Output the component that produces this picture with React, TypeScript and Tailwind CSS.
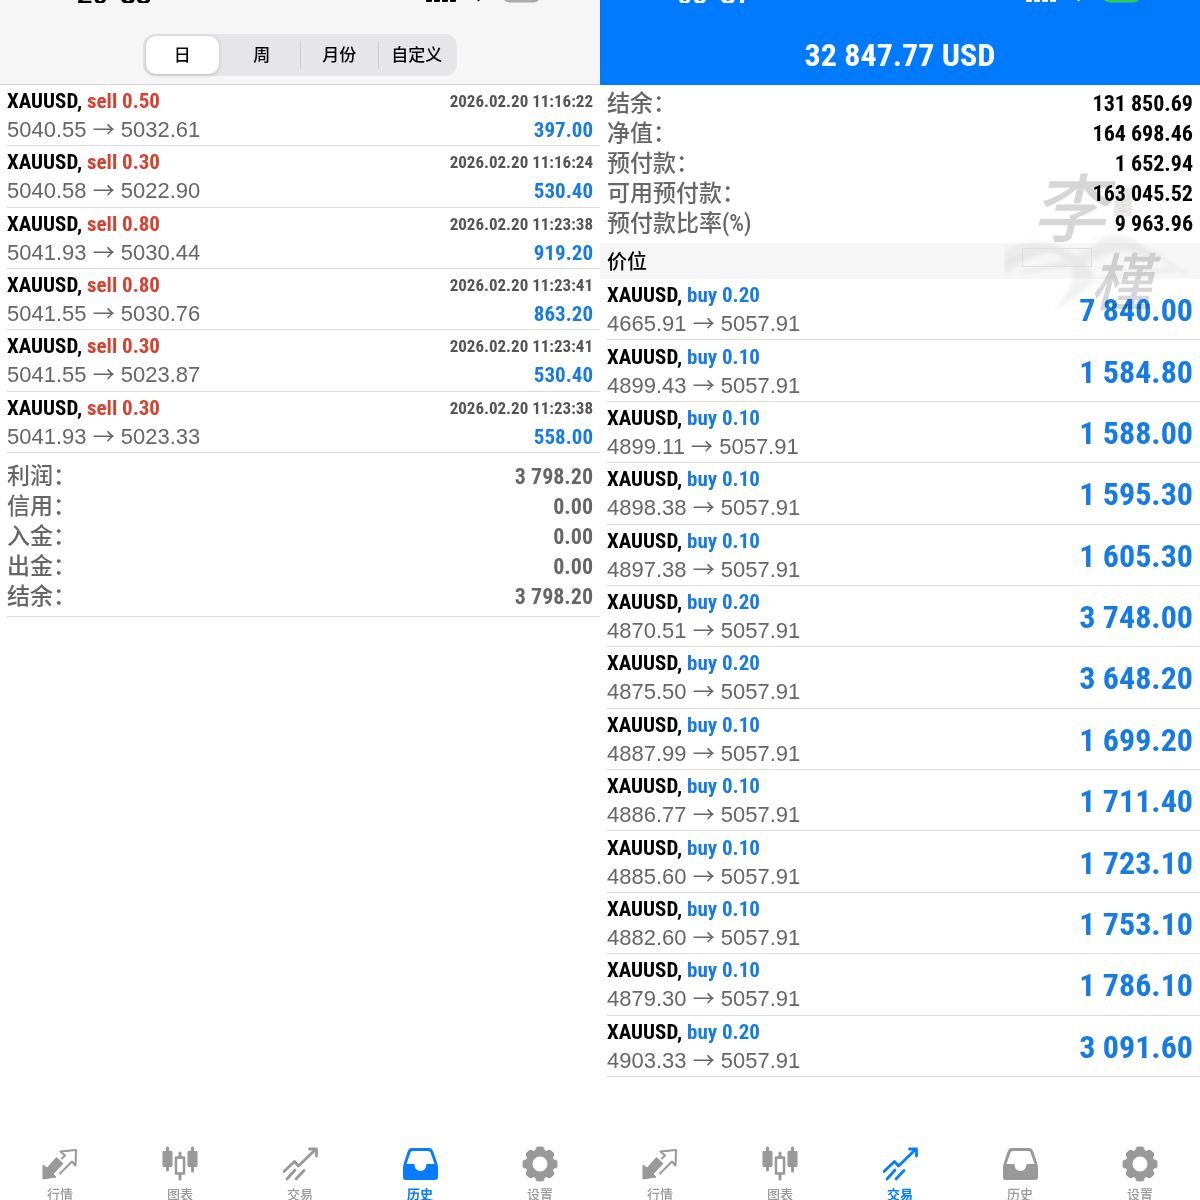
import { useState } from "react";
import type { ReactNode } from "react";

const CONDENSED = "font-['Liberation_Sans_Narrow','Roboto_Condensed','Liberation_Sans','Noto_Sans_CJK_SC',sans-serif] font-bold";
const REGULAR = "font-['Liberation_Sans','Noto_Sans_CJK_SC',sans-serif]";

type Deal = { side: string; lot: string; open: string; close: string; profit: string; time?: string };

const deals: Deal[] = [
  { side: "sell", lot: "0.50", open: "5040.55", close: "5032.61", profit: "397.00", time: "2026.02.20 11:16:22" },
  { side: "sell", lot: "0.30", open: "5040.58", close: "5022.90", profit: "530.40", time: "2026.02.20 11:16:24" },
  { side: "sell", lot: "0.80", open: "5041.93", close: "5030.44", profit: "919.20", time: "2026.02.20 11:23:38" },
  { side: "sell", lot: "0.80", open: "5041.55", close: "5030.76", profit: "863.20", time: "2026.02.20 11:23:41" },
  { side: "sell", lot: "0.30", open: "5041.55", close: "5023.87", profit: "530.40", time: "2026.02.20 11:23:41" },
  { side: "sell", lot: "0.30", open: "5041.93", close: "5023.33", profit: "558.00", time: "2026.02.20 11:23:38" },
];

const positions: Deal[] = [
  ["0.20", "4665.91", "7 840.00"],
  ["0.10", "4899.43", "1 584.80"],
  ["0.10", "4899.11", "1 588.00"],
  ["0.10", "4898.38", "1 595.30"],
  ["0.10", "4897.38", "1 605.30"],
  ["0.20", "4870.51", "3 748.00"],
  ["0.20", "4875.50", "3 648.20"],
  ["0.10", "4887.99", "1 699.20"],
  ["0.10", "4886.77", "1 711.40"],
  ["0.10", "4885.60", "1 723.10"],
  ["0.10", "4882.60", "1 753.10"],
  ["0.10", "4879.30", "1 786.10"],
  ["0.20", "4903.33", "3 091.60"],
].map(([lot, open, profit]) => ({ side: "buy", lot, open, close: "5057.91", profit }));

const totals = [
  ["利润：", "3 798.20"],
  ["信用：", "0.00"],
  ["入金：", "0.00"],
  ["出金：", "0.00"],
  ["结余：", "3 798.20"],
];

const account = [
  ["结余：", "131 850.69"],
  ["净值：", "164 698.46"],
  ["预付款：", "1 652.94"],
  ["可用预付款：", "163 045.52"],
  ["预付款比率(%)", "9 963.96"],
];

function StatusBar({ hours, minutes, battery }: { hours: string; minutes: string; battery: string }) {
  return (
    <div className="flex h-[3px] items-end justify-between overflow-hidden pl-[77px] pr-[59px]">
      <div className={`${REGULAR} flex gap-3 text-[28px] font-bold leading-[16px]`}>
        <span>{hours}</span>
        <span>{minutes}</span>
      </div>
      <svg className="h-[3px] w-[116px]" viewBox="0 0 116 3" aria-hidden="true">
        <path d="M1 0h6v1a1 1 0 0 1-1 1H2a1 1 0 0 1-1-1zM9 0h6v1a1 1 0 0 1-1 1h-4a1 1 0 0 1-1-1zM17 0h6v1a1 1 0 0 1-1 1h-4a1 1 0 0 1-1-1zM25 0h6v1a1 1 0 0 1-1 1h-4a1 1 0 0 1-1-1zM52 0h3l-1.5 1.5z" fill="currentColor" />
        <path d="M79 0h35c-2 2-4 2.500-7 2.500H87c-4 0-6-.5-8-2.500z" className={battery} />
      </svg>
    </div>
  );
}

function Periods() {
  const [period, setPeriod] = useState("日");
  return (
    <div role="group" aria-label="周期" className="mx-auto grid w-[314px] grid-cols-4 rounded-xl bg-[#e6e6e8] p-0.5">
      {["日", "周", "月份", "自定义"].map((p, i) => (
        <button
          key={p}
          type="button"
          aria-pressed={p === period}
          onClick={() => setPeriod(p)}
          className="flex items-center text-[17px] font-medium text-black"
        >
          <span className={`h-7 w-px ${i > 1 ? "bg-[#cfcfd2]" : "bg-transparent"}`} />
          <span className={`grow rounded-[10px] pt-0.5 leading-9 ${p === period ? "mr-1 bg-white shadow-[0_1px_4px_rgba(0,0,0,0.2)]" : ""}`}>{p}</span>
        </button>
      ))}
    </div>
  );
}

function DealRow({ deal }: { deal: Deal }) {
  const sell = deal.side === "sell";
  return (
    <li className="flex items-center justify-between border-b border-[#dcdcdc] pr-[7px]">
      <div className="pt-0.5">
        <div className={`${CONDENSED} text-[21px] leading-7 text-black`}>
          XAUUSD, <span className={sell ? "text-[#d8402f]" : "text-[#177be5]"}>{deal.side} {deal.lot}</span>
        </div>
        <div className={`${REGULAR} text-[22px] leading-[30px] text-[#666]`}>
          {deal.open} <span className="font-['Noto_Sans_CJK_SC',sans-serif] leading-none">→</span> {deal.close}
        </div>
      </div>
      {deal.time ? (
        <div className={`${CONDENSED} pt-0.5 text-right`}>
          <div className="text-[17px] leading-7 text-[#555]">{deal.time}</div>
          <div className="text-[21px] leading-[30px] text-[#177be5]">{deal.profit}</div>
        </div>
      ) : (
        <div className={`${CONDENSED} pt-0.5 text-[32px] leading-10 text-[#177be5]`}>{deal.profit}</div>
      )}
    </li>
  );
}

function Summary({ rows, value }: { rows: string[][]; value: string }) {
  return (
    <dl className="pr-[7px]">
      {rows.map(([label, amount]) => (
        <div key={label} className={`${CONDENSED} flex justify-between leading-[30px]`}>
          <dt className="text-[23px] font-medium text-[#666]">{label}</dt>
          <dd className={`text-[22px] ${value}`}>{amount}</dd>
        </div>
      ))}
    </dl>
  );
}

const icons: Record<string, ReactNode> = {
  行情: (
    <>
      <path d="M1 19V33L14 31L11 28L21 17.500L14.500 11.500L5 22Z" fill="currentColor" />
      <path d="M19.500 13L23 9.500L18.500 5.500L34 4L33.500 19.500L30 15.500L17.500 28" strokeWidth="2" />
    </>
  ),
  图表: (
    <>
      <path d="M5.500 2V24M30.500 2V25M18 7V11M18 28V33" strokeWidth="3" strokeLinecap="round" />
      <rect x="0.500" y="5" width="10" height="16" rx="1" fill="currentColor" stroke="none" />
      <rect x="25.500" y="5" width="10" height="16" rx="1" fill="currentColor" stroke="none" />
      <rect x="14" y="11.500" width="8" height="16" strokeWidth="2.500" />
    </>
  ),
  交易: (
    <path d="M2 25.500L12.500 15.500L16.500 20L34 3M27.500 3H34.500V10M5 33L13 24M14 33L22 24.500" strokeWidth="2.800" strokeLinecap="round" />
  ),
  历史: (
    <path
      d="M9 2H27Q30 2 31.500 6L35 16.500Q36 19 36 22V31Q36 34 33 34H3.500Q1 34 1 31V22Q1 19 2 16.500L5.500 6Q7 2 9 2ZM11 5Q9 5 8.500 6.500L4.500 18H12.500C12.500 22 14.500 25 18.500 25S24 22 24.500 18H32.500L28.500 6.500Q28 5 26 5Z"
      fill="currentColor"
      fillRule="evenodd"
      stroke="none"
    />
  ),
  设置: (
    <g fill="currentColor" stroke="none">
      <circle cx="18" cy="18" r="14.500" />
      {[0, 45, 90, 135].map((a) => (
        <rect key={a} x="13.500" y="0.500" width="9" height="35" rx="3.500" transform={`rotate(${a} 18 18)`} />
      ))}
      <circle cx="18" cy="18" r="7.500" fill="white" />
    </g>
  ),
};

function TabBar({ active }: { active: string }) {
  return (
    <nav className="mt-auto grid h-[54px] shrink-0 grid-cols-5 overflow-hidden">
      {Object.entries(icons).map(([name, icon]) => (
        <button
          key={name}
          type="button"
          aria-current={name === active ? "page" : undefined}
          className={`flex flex-col items-center gap-1 text-[13px] leading-[18px] ${name === active ? "font-bold text-[#087cff]" : "font-medium text-[#999]"}`}
        >
          <svg className="size-9 shrink-0" viewBox="0 0 36 36" fill="none" stroke="currentColor" strokeLinejoin="round" aria-hidden="true">
            {icon}
          </svg>
          {name}
        </button>
      ))}
    </nav>
  );
}

// Ink-wash brand mark laid over the account figures
function Watermark() {
  return (
    <div className="pointer-events-none absolute right-0 top-[86px] h-[150px] w-[196px] mix-blend-multiply" aria-hidden="true">
      <svg className="absolute inset-0 size-full" viewBox="0 0 196 150" fill="none">
        <g className="blur-[2px]">
          <path d="M0 80C30 62 58 72 80 91S80 120 48 142C65 120 78 104 60 89S25 88 0 104Z" fill="#f3f3f3" />
          <path d="M18 98C60 93 87 80 102 65C122 58 139 72 156 94C130 79 116 76 96 86S55 98 18 102Z" fill="#f3f3f3" />
          <path d="M0 93C40 73 70 76 85 103M88 68C120 68 145 77 184 105M60 130C80 110 120 98 170 99" stroke="#ececec" strokeWidth="2" />
        </g>
        <rect x="18.500" y="77.500" width="69" height="18" stroke="#e8e8e8" />
        <rect x="110" y="17" width="18" height="28" fill="#ebe9e8" />
        <path d="M115 21h9v8h-9zM114 34h11M119 31v11M115 40h9" stroke="#e0d9d7" />
      </svg>
      <span className="absolute left-[28px] top-0 text-[74px] font-medium italic leading-[80px] text-[#d6d6d6]">李</span>
      <span className="absolute left-[86px] top-[78px] text-[62px] font-medium italic leading-[70px] text-[#d6d6d6]">槿</span>
    </div>
  );
}

export default function App() {
  return (
    <main className="grid h-screen grid-cols-2 overflow-hidden bg-white font-['Liberation_Sans','Noto_Sans_CJK_SC',sans-serif]">
      <section className="flex min-w-0 flex-col">
        <header className="h-[85px] shrink-0 border-b border-[#d4d4d4] bg-[#f6f6f6] text-black">
          <StatusBar hours="20" minutes="38" battery="fill-[#aaa]" />
          <div className="pt-[31px]">
            <Periods />
          </div>
        </header>
        <div className="pl-[7px]">
          <ul className="grid min-h-[368px] auto-rows-fr">
            {deals.map((d, i) => <DealRow key={i} deal={d} />)}
          </ul>
          <div className="border-b border-[#dcdcdc] pb-1 pt-[9px]">
            <Summary rows={totals} value="text-[#666]" />
          </div>
        </div>
        <TabBar active="历史" />
      </section>

      <section className="flex min-w-0 flex-col">
        <header className="h-[85px] shrink-0 bg-[#007aff] text-white">
          <StatusBar hours="09" minutes="37" battery="fill-[#34c759]" />
          <h1 className={`${CONDENSED} pt-8 text-center text-[32px] leading-10`}>32 847.77 USD</h1>
        </header>
        <div className="relative">
          <div className="pb-1 pl-[7px] pt-1">
            <Summary rows={account} value="text-black" />
          </div>
          <h2 className="bg-[#f6f6f6] pl-[7px] pt-0.5 text-[20px] font-medium leading-[34px] text-black">价位</h2>
          <ul className="ml-[7px] grid min-h-[798px] auto-rows-fr">
            {positions.map((p) => <DealRow key={p.open} deal={p} />)}
          </ul>
          <Watermark />
        </div>
        <TabBar active="交易" />
      </section>
    </main>
  );
}
